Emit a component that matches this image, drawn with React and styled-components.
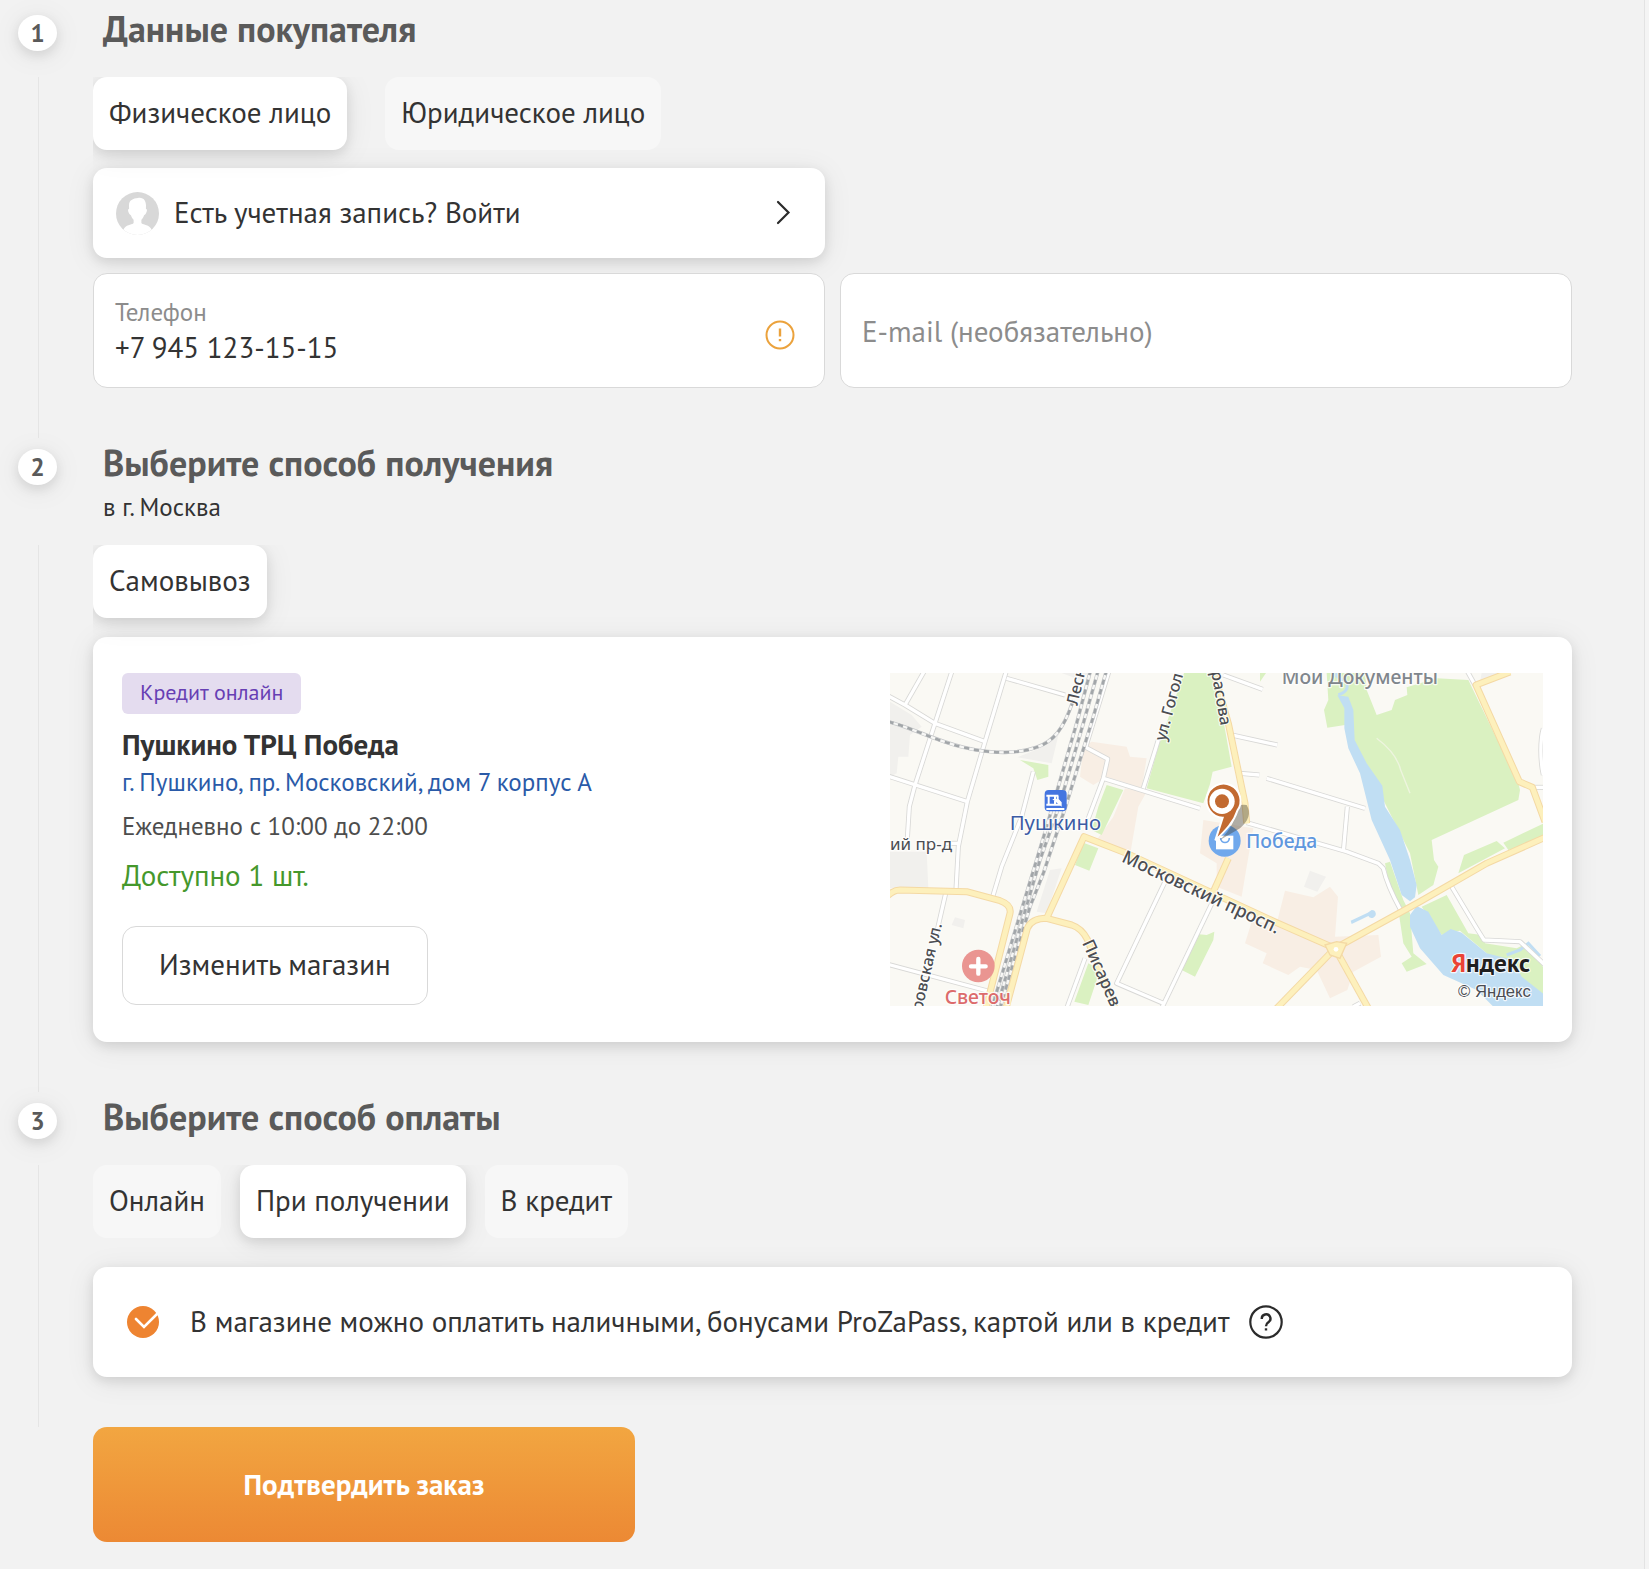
import React, { useState } from "react";
import styled, { createGlobalStyle, css } from "styled-components";

const GlobalStyle = createGlobalStyle`
  *, *::before, *::after { box-sizing: border-box; }
  body {
    margin: 0;
    background: #f4f4f4;
    color: #333;
    font-family: "PT Sans", Lato, "Noto Sans", sans-serif;
    font-size: 29px;
    line-height: 34px;
  }
  button, input { font: inherit; color: inherit; }
  h2, h3, p { margin: 0; }
`;

const softShadow = css`
  box-shadow: 0 4px 12px rgba(0, 0, 0, 0.1), 0 4px 30px rgba(0, 0, 0, 0.08);
`;

const Page = styled.main`
  min-height: 100vh;
  margin-right: 4px;
  padding: 4px 72px 26px 18px;
  background: #f2f2f2;
  border-right: 1px solid #e3e3e3;
`;

const Step = styled.section`
  display: grid;
  grid-template-columns: 75px minmax(0, 1fr);
`;

const StepNumber = styled.span`
  display: flex;
  align-items: center;
  justify-content: center;
  width: 39px;
  height: 36px;
  margin-top: 11px;
  border-radius: 50%;
  background: #fff;
  color: #5a5a5a;
  font-size: 25px;
  font-weight: 700;
  line-height: 28px;
  ${softShadow}
`;

const StepHeader = styled.header`
  padding: 4px 10px 24px;
`;

const StepTitle = styled.h2`
  padding-bottom: 3px;
  color: #5a5a5a;
  font-size: 36px;
  font-weight: 700;
  line-height: 42px;
`;

const StepNote = styled.p`
  padding-top: 6px;
  font-size: 25px;
  line-height: 28px;
`;

const StepLine = styled.div`
  margin-left: 20px;
  border-left: 1px solid #e5e5e5;
`;

const StepBody = styled.div`
  display: flex;
  flex-direction: column;
  gap: ${(p) => p.$gap}px;
  padding-bottom: 50px;
`;

const Tabs = styled.div`
  display: flex;
  gap: ${(p) => p.$gap || 20}px;
  clip-path: inset(0 0 -30px 0);
`;

const Tab = styled.button`
  padding: 18px 16px 21px;
  border: 0;
  border-radius: 14px;
  background: #f7f7f7;
  white-space: nowrap;
  cursor: pointer;
  &[aria-pressed="true"] {
    background: #fff;
    ${softShadow}
  }
`;

const ContactGrid = styled.div`
  display: grid;
  grid-template-columns: repeat(2, minmax(0, 1fr));
  gap: 15px;
`;

const LoginButton = styled.button`
  grid-column: 1;
  display: flex;
  align-items: center;
  gap: 15px;
  height: 90px;
  padding: 0 31px 0 23px;
  border: 0;
  border-radius: 14px;
  background: #fff;
  text-align: left;
  cursor: pointer;
  ${softShadow}
`;

const LoginText = styled.span`
  flex: 1;
  padding-bottom: 2px;
`;

const Field = styled.div`
  grid-column: ${(p) => p.$column};
  display: flex;
  align-items: center;
  height: 115px;
  padding: 0 29px 0 21px;
  border: 1px solid #d9d9d9;
  border-radius: 14px;
  background: #fff;
`;

const FieldText = styled.div`
  flex: 1;
  display: flex;
  flex-direction: column;
  gap: 4px;
`;

const FieldLabel = styled.label`
  color: #8c8c8c;
  font-size: 25px;
  line-height: 28px;
`;

const FieldInput = styled.input`
  width: 100%;
  height: 34px;
  padding: 0;
  border: 0;
  outline: 0;
  background: transparent;
  &::placeholder { color: #8c8c8c; opacity: 1; }
`;

const FieldIcon = styled.span`
  display: flex;
  padding-top: 9px;
`;

const ShopCard = styled.article`
  display: grid;
  grid-template-columns: 768fr 653fr;
  padding: 36px 29px;
  border-radius: 14px;
  background: #fff;
  ${softShadow}
`;

const ShopInfo = styled.div`
  display: flex;
  flex-direction: column;
  align-items: flex-start;
`;

const CreditTag = styled.span`
  padding: 5px 18px 8px;
  border-radius: 6px;
  background: #e4dcef;
  color: #673fb4;
  font-size: 22px;
  line-height: 28px;
`;

const ShopName = styled.h3`
  margin-top: 13px;
  font-size: 29px;
  font-weight: 700;
  line-height: 34px;
`;

const ShopAddress = styled.a`
  margin-top: 7px;
  color: #2a5aa8;
  font-size: 25px;
  line-height: 28px;
  text-decoration: none;
`;

const ShopHours = styled.p`
  margin-top: 16px;
  color: #4d4d4d;
  font-size: 25px;
  line-height: 28px;
`;

const ShopStock = styled.p`
  margin-top: 18px;
  color: #45982c;
`;

const OutlineButton = styled.button`
  height: 79px;
  margin-top: 34px;
  padding: 0 36px 4px;
  border: 1px solid #d9d9d9;
  border-radius: 14px;
  background: #fff;
  cursor: pointer;
`;

const MapPicture = styled.svg`
  display: block;
  width: 100%;
  height: 333px;
  font-family: "Noto Sans", sans-serif;
`;

const PayCard = styled.div`
  display: flex;
  align-items: center;
  min-height: 110px;
  padding: 0 34px;
  border-radius: 14px;
  background: #fff;
  ${softShadow}
`;

const PayLabel = styled.label`
  display: flex;
  align-items: center;
  gap: 31px;
`;

const PayText = styled.span`
  padding-bottom: 2px;
`;

const CheckWrap = styled.span`
  display: grid;
  & > * { grid-area: 1 / 1; }
  & > svg { pointer-events: none; }
`;

const CheckInput = styled.input`
  appearance: none;
  width: 32px;
  height: 32px;
  margin: 0;
  border-radius: 50%;
  background: #ddd;
  &:checked { background: #ee8431; }
`;

const HelpButton = styled.button`
  display: flex;
  margin-left: 20px;
  padding: 0;
  border: 0;
  background: transparent;
  cursor: pointer;
`;

const SubmitButton = styled.button`
  display: block;
  width: 542px;
  max-width: 100%;
  height: 115px;
  margin-left: 75px;
  padding: 0 16px 2px;
  border: 0;
  border-radius: 14px;
  background: linear-gradient(#f2a641, #ec8934);
  color: #fff;
  font-weight: 700;
  cursor: pointer;
`;

const StreetGroup = styled.g`
  fill: none;
  stroke: ${(p) => p.$color};
  stroke-width: ${(p) => p.$width};
  stroke-linejoin: round;
  stroke-dasharray: ${(p) => p.$dash || "none"};
`;

const MapText = styled.text`
  fill: ${(p) => p.$color || "#4b4d52"};
  stroke: #fff;
  stroke-width: 7px;
  stroke-opacity: 0.8;
  stroke-linejoin: round;
  paint-order: stroke;
  text-anchor: ${(p) => p.$anchor || "start"};
  font-size: ${(p) => p.$size || 48}px;
  font-weight: ${(p) => p.$weight || 500};
`;

const MapLogo = styled(MapText)`
  font-family: "PT Sans", Lato, sans-serif;
`;

const MapCredit = styled(MapText)`
  font-family: "Liberation Sans", Arial, sans-serif;
`;

function Avatar() {
  return (
    <svg width="43" height="43" viewBox="0 0 43 43" aria-hidden="true">
      <clipPath id="avatar-clip"><circle cx="21.5" cy="21.5" r="21.5" /></clipPath>
      <g clipPath="url(#avatar-clip)">
        <rect width="43" height="43" fill="#d8d8d8" />
        <path
          fill="#fff"
          d="M22 6c5.500-1 8 3 8 7.500 0 1.500-.1 2.500-.1 3.300 1.500.2 1.300 2.200 0 4.700-.7 1.400-1.500 1.200-1.900 2-.8 2.100-1.600 3.300-2.600 4.300v3.200c.5 1.500 6.200 1.200 9.200 5 1.500 2 2 4.500 2.400 7H6c.4-2.500.9-5 2.400-7 3-3.800 8.700-3.500 9.200-5v-3.200c-1-1-1.800-2.200-2.600-4.300-.4-.8-1.200-.6-1.900-2-1.300-2.500-1.500-4.500 0-4.700 0-.8-.1-1.800-.1-3.300C13 8 17 6.500 22 6Z"
        />
      </g>
    </svg>
  );
}

function Chevron() {
  return (
    <svg width="20" height="26" viewBox="0 0 20 26" aria-hidden="true">
      <path d="M4 2 14.500 12.500 4 23" fill="none" stroke="#2b2b2b" strokeWidth="2.200" strokeLinecap="round" />
    </svg>
  );
}

function Warning() {
  return (
    <svg width="30" height="30" viewBox="0 0 30 30" role="img" aria-label="Проверьте номер">
      <g fill="none" stroke="#eba23c" strokeWidth="2">
        <circle cx="15" cy="15" r="13.500" />
        <path d="M15 8.500v8M15 19v2.200" strokeWidth="2.400" />
      </g>
    </svg>
  );
}

const streets = [
  "M20 105 75 135 165 190 315 245", "M75 135 135 30", "M217 30 165 190 105 375 88 440 82 535",
  "M380 30 315 245 262 425 235 560 228 690", "M380 55 555 105", "M20 347 262 425",
  "M460 335 425 470 365 620 338 710", "M688 30 617 262 683 297 670 355 625 475",
  "M670 355 960 445", "M835 240 790 385", "M197 700 165 840", "M20 912 330 995",
  "M855 665 710 970 850 1030", "M1010 700 845 1045", "M615 895 560 1045", "M195 550 235 550",
  "M1030 45 1148 88", "M1055 225 1192 255", "M1080 340 1138 345", "M1160 355 1455 445",
  "M1402 440 1390 575", "M1100 488 1400 575 1495 610 1510 625C1520 670 1540 710 1562 750",
  "M1715 680 1790 805 1812 840 1920 845 1995 915", "M1760 30 1785 75", "M1955 382H1995",
  "M1990 205C1980 240 1980 300 1990 345", "M1420 1040 1440 1030",
];
const avenues = [
  "M20 710Q40 690 60 690L260 695 360 722Q395 735 390 760L318 1045",
  "M378 1045 442 805Q455 775 500 775L575 795Q605 805 622 838L705 1045",
  "M500 775 612 530 740 580 1190 788 1365 865",
  "M1365 865 1620 725 1820 610 1995 532", "M1365 865 1190 1045", "M1365 865 1465 1045",
  "M1000 30 1045 190 1095 430 1100 490", "M1045 595 1000 695",
  "M1890 36 1788 75 1918 365 1957 382 1995 485",
];
const rails = [
  "M632 30 590 190 500 500 335 1045", "M655 30 610 190 540 430 480 600 350 1045",
  "M680 30 640 170 560 430 490 640 450 740 360 1045",
  "M25 185C100 205 160 240 250 262S420 280 470 262 550 210 580 120",
];

function LocationMap() {
  const draw = (list) => list.map((d) => <path key={d} d={d} />);
  return (
    <MapPicture viewBox="30 39 1959 999" preserveAspectRatio="xMidYMid slice" role="img" aria-label="Карта проезда">
      <rect x="0" y="0" width="2020" height="1060" fill="#faf9f4" />
      <g fill="#f1f0ed">
        <path d="M30 125 95 165 125 200 90 225 85 290 55 290 50 340 30 350ZM30 575H140L145 685H30ZM540 205 515 310 412 292 480 265ZM510 630 545 625 500 760 470 755ZM545 39H625L600 60ZM225 772 255 780 250 805 215 795ZM1290 632 1338 650 1312 695 1272 680ZM1805 39H1870L1800 66Z" />
      </g>
      <path fill="#f8eee4" d="M635 245 740 260 750 290 800 295 785 385 680 350 640 375 600 350 610 260ZM735 385 800 395 775 440 750 585 650 540 700 470ZM970 480 1120 505 1100 620 1085 710 1010 680 1010 610 960 580ZM1215 692 1300 712 1350 680 1374 710 1365 830 1495 825 1503 890 1420 935 1402 990 1350 1015 1310 930 1260 920 1225 945 1148 910 1160 880 1095 850 1115 785 1190 790Z" />
      <path fill="#daf1c1" d="M912 39H1000L1030 180 1055 320 998 335 990 372 970 430 800 385 835 260ZM420 300 505 315 505 350 472 360 460 325ZM680 375 730 390 665 525 635 510 655 440ZM610 548 655 565 628 632 585 615ZM950 822 980 825 1003 815 1000 840 945 950 905 930ZM625 910 660 930 625 1035 583 1025ZM1140 39H1158L1140 65ZM1340 39H1455L1460 90 1490 165 1535 150 1545 120 1582 105 1580 82 1670 55 1765 60 1915 370 1920 390 1915 420 1655 540 1662 600 1675 620 1660 675 1615 705 1590 580 1420 240 1395 195 1342 203 1332 150 1345 120ZM1752 585 1850 543 1875 565 1735 640ZM1870 548 1995 488V535L1885 570ZM1625 740 1700 705 1765 820 1805 825 1815 850 1910 865 1940 850 1995 930V1015L1890 950 1820 880 1740 812 1685 825ZM1515 610 1530 605 1570 720 1590 760 1600 880 1640 912 1580 935 1565 910 1595 890 1570 850 1555 750 1530 690Z" />
      <g fill="#c0def3">
        <path d="M1405 110 1420 150 1424 240 1460 310 1507 377 1515 440 1560 510 1590 600 1610 675 1605 712 1590 724 1565 705 1530 600 1475 480 1440 340 1405 265 1393 205 1393 145 1372 106ZM1610 738 1645 755 1685 825 1712 807 1745 818 1820 880 1900 900 1925 950 1995 1005V1045H1845L1790 990 1690 945 1620 865 1590 800 1590 765ZM1475 750A12 12 0 1 1 1465 768L1415 792 1412 782 1463 758Z" />
        <path d="M1367 30 1370 48 1400 68Q1408 95 1375 104M1880 885 1920 870 1945 850 1980 888" fill="none" stroke="#c0def3" strokeWidth="9" />
      </g>
      <path d="M1490 235Q1550 280 1562 330L1590 400" stroke="#eef5df" strokeWidth="4" fill="none" />
      <StreetGroup $color="#d8d8d6" $width="15">{draw(streets)}</StreetGroup>
      <StreetGroup $color="#fff" $width="10">{draw(streets)}</StreetGroup>
      <StreetGroup $color="#c4c6c8" $width="11">{draw(rails)}</StreetGroup>
      <StreetGroup $color="#f7f7f5" $width="7">{draw(rails)}</StreetGroup>
      <StreetGroup $color="#a2a6a9" $width="8" $dash="16 14">{draw(rails)}</StreetGroup>
      <StreetGroup $color="#f4d9a4" $width="21">{draw(avenues)}</StreetGroup>
      <StreetGroup $color="#fdf0bc" $width="15">{draw(avenues)}</StreetGroup>
      <path d="M1335 855 1370 845 1400 850 1380 895 1350 885Z" fill="#fdf0bc" stroke="#f4d9a4" strokeWidth="4" />
      <circle cx="1368" cy="868" r="7" fill="#fff" />

      <MapText transform="translate(592 138) rotate(-77)">Лесн</MapText>
      <MapText transform="translate(856 245) rotate(-75)">ул. Гогол</MapText>
      <MapText transform="translate(1022 198) rotate(80)" $anchor="end">расова</MapText>
      <MapText x="30" y="571" $size="51" $weight="400">ий пр-д</MapText>
      <MapText transform="translate(186 793) rotate(-77)" $anchor="end">ровская ул.</MapText>
      <MapText transform="translate(606 848) rotate(66)" $size="51">Писарев</MapText>
      <MapText transform="translate(722 604) rotate(25)" $size="54">Московский просп.</MapText>
      <MapText x="1205" y="71" $size="58" $color="#80868c">Мои Документы</MapText>

      <circle cx="295" cy="918" r="49" fill="#ea9591" />
      <path d="M295 897V941M273 919H317" stroke="#fff" strokeWidth="13" strokeLinecap="round" />
      <MapText x="194" y="1033" $size="58" $color="#dc6b6b">Светоч</MapText>

      <rect x="494" y="390" width="66" height="64" rx="12" fill="#4475e0" />
      <path d="M499 407H535M499 434H540M506 407V434M525 407V434M533 407V420H525L542 434V428L533 418M499 447H553" stroke="#fff" strokeWidth="6" fill="none" />
      <MapText x="389" y="511" $size="61" $weight="400" $color="#3c5ba4">Пушкино</MapText>

      <circle cx="1034" cy="542" r="48" fill="#70a8ec" />
      <path d="M1008 527H1060V568H1008Z" fill="#fff" />
      <path d="M1022 534C1022 552 1048 552 1048 534" stroke="#70a8ec" strokeWidth="5" fill="none" />
      <MapText x="1098" y="563" $size="58" $color="#5f97de">Победа</MapText>
      <path d="M1020 540Q1070 490 1065 450 1075 430 1100 435 1120 470 1080 505Z" fill="#423d30" opacity="0.4" />
      <path d="M1006 541 1028 473A51 51 0 1 1 1072 452C1062 485 1038 510 1006 541Z" fill="#c26a31" stroke="#fff" strokeWidth="6" />
      <circle cx="1026" cy="424" r="38" fill="#fff" />
      <circle cx="1026" cy="424" r="21" fill="#c26a31" />

      <MapLogo x="1714" y="935" $size="76" $weight="700" $color="#1f1f1f">
        <tspan fill="#ea4335">Я</tspan>ндекс
      </MapLogo>
      <MapCredit x="1734" y="1010" $size="50" $weight="400">© Яндекс</MapCredit>
    </MapPicture>
  );
}

function TabGroup({ items, initial, gap, label }) {
  const [active, setActive] = useState(initial);
  return (
    <Tabs $gap={gap} role="group" aria-label={label}>
      {items.map((item) => (
        <Tab key={item} type="button" aria-pressed={item === active} onClick={() => setActive(item)}>
          {item}
        </Tab>
      ))}
    </Tabs>
  );
}

function CheckoutStep({ number, title, note, gap, children }) {
  return (
    <Step>
      <StepNumber>{number}</StepNumber>
      <StepHeader>
        <StepTitle>{title}</StepTitle>
        {note && <StepNote>{note}</StepNote>}
      </StepHeader>
      <StepLine />
      <StepBody $gap={gap}>{children}</StepBody>
    </Step>
  );
}

export default function App() {
  return (
    <>
      <GlobalStyle />
      <Page>
        <CheckoutStep number={1} title="Данные покупателя" gap={18}>
          <TabGroup
            label="Тип покупателя"
            items={["Физическое лицо", "Юридическое лицо"]}
            initial="Физическое лицо"
            gap={38}
          />
          <ContactGrid>
            <LoginButton type="button">
              <Avatar />
              <LoginText>Есть учетная запись? Войти</LoginText>
              <Chevron />
            </LoginButton>
            <Field $column={1}>
              <FieldText>
                <FieldLabel htmlFor="phone">Телефон</FieldLabel>
                <FieldInput id="phone" type="tel" defaultValue="+7 945 123-15-15" />
              </FieldText>
              <FieldIcon><Warning /></FieldIcon>
            </Field>
            <Field $column={2}>
              <FieldInput type="email" placeholder="E-mail (необязательно)" aria-label="E-mail (необязательно)" />
            </Field>
          </ContactGrid>
        </CheckoutStep>

        <CheckoutStep number={2} title="Выберите способ получения" note="в г. Москва" gap={19}>
          <TabGroup label="Способ получения" items={["Самовывоз"]} initial="Самовывоз" />
          <ShopCard>
            <ShopInfo>
              <CreditTag>Кредит онлайн</CreditTag>
              <ShopName>Пушкино ТРЦ Победа</ShopName>
              <ShopAddress href="#map">г. Пушкино, пр. Московский, дом 7 корпус А</ShopAddress>
              <ShopHours>Ежедневно с 10:00 до 22:00</ShopHours>
              <ShopStock>Доступно 1 шт.</ShopStock>
              <OutlineButton type="button">Изменить магазин</OutlineButton>
            </ShopInfo>
            <LocationMap />
          </ShopCard>
        </CheckoutStep>

        <CheckoutStep number={3} title="Выберите способ оплаты" gap={29}>
          <TabGroup
            label="Способ оплаты"
            items={["Онлайн", "При получении", "В кредит"]}
            initial="При получении"
            gap={19}
          />
          <PayCard>
            <PayLabel>
              <CheckWrap>
                <CheckInput type="checkbox" defaultChecked />
                <svg width="32" height="32" viewBox="0 0 32 32" aria-hidden="true">
                  <path d="M9 13 17 21 31 7" fill="none" stroke="#fff" strokeWidth="2.600" strokeLinecap="round" />
                </svg>
              </CheckWrap>
              <PayText>В магазине можно оплатить наличными, бонусами ProZaPass, картой или в кредит</PayText>
            </PayLabel>
            <HelpButton type="button" aria-label="Подробнее об оплате">
              <svg width="34" height="34" viewBox="0 0 34 34" aria-hidden="true">
                <g fill="none" stroke="#2b2b2b" strokeWidth="2.200">
                  <circle cx="17" cy="17" r="15.700" />
                  <path d="M12.800 14A4.300 4.300 0 1 1 19.500 17.200C18 18.200 17 18.800 17 21.200" strokeWidth="2.400" />
                  <path d="M17 23.300V25.500" strokeWidth="2.400" />
                </g>
              </svg>
            </HelpButton>
          </PayCard>
        </CheckoutStep>

        <SubmitButton type="submit">Подтвердить заказ</SubmitButton>
      </Page>
    </>
  );
}
